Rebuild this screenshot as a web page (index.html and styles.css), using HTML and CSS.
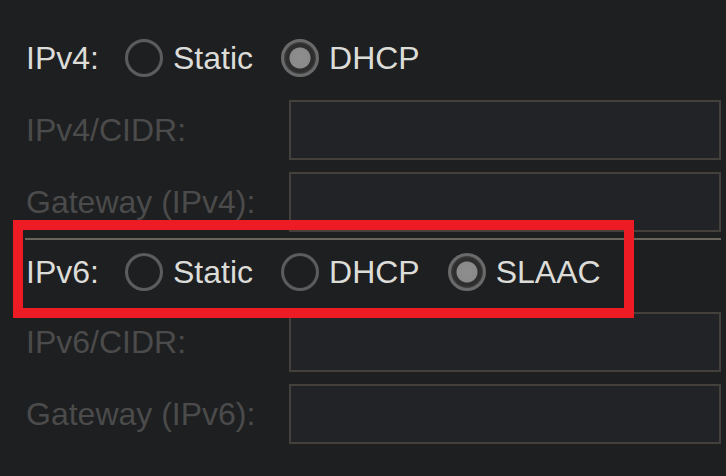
FILE: index.html
```html
<!DOCTYPE html>
<html>
<head>
<meta charset="utf-8">
<link rel="stylesheet" href="styles.css">
</head>
<body>
<div class="panel">
  <div class="mode-row">
    <span class="mode-label">IPv4:</span>
    <span class="option"><span class="radio"></span><span class="opt-text">Static</span></span>
    <span class="option"><span class="radio checked"></span><span class="opt-text">DHCP</span></span>
  </div>
  <div class="field-row first">
    <span class="field-label">IPv4/CIDR:</span>
    <span class="field-input"></span>
  </div>
  <div class="field-row">
    <span class="field-label">Gateway (IPv4):</span>
    <span class="field-input"></span>
  </div>
  <div class="separator"></div>
  <div class="mode-row v6">
    <span class="mode-label">IPv6:</span>
    <span class="option"><span class="radio"></span><span class="opt-text">Static</span></span>
    <span class="option"><span class="radio"></span><span class="opt-text">DHCP</span></span>
    <span class="option"><span class="radio checked"></span><span class="opt-text">SLAAC</span></span>
  </div>
  <div class="field-row first">
    <span class="field-label">IPv6/CIDR:</span>
    <span class="field-input"></span>
  </div>
  <div class="field-row">
    <span class="field-label">Gateway (IPv6):</span>
    <span class="field-input"></span>
  </div>
  <div class="highlight"></div>
</div>
</body>
</html>
```
FILE: styles.css
```css
html, body {
  margin: 0;
  padding: 0;
  background: #1e1f21;
  width: 726px;
  height: 476px;
  overflow: hidden;
}
.panel {
  position: relative;
  padding: 39px 5px 0 26px;
  font-family: "Liberation Sans", Arial, sans-serif;
  font-size: 32px;
  color: #dcdcd8;
}
.mode-row {
  display: flex;
  align-items: center;
  height: 38px;
  margin-bottom: 23px;
}
.mode-row.v6 {
  margin-top: 13px;
  margin-bottom: 21px;
}
.mode-label {
  width: 99px;
  flex: none;
  line-height: 38px;
}
.option {
  display: flex;
  align-items: center;
  margin-right: 28px;
}
.radio {
  box-sizing: border-box;
  width: 38px;
  height: 38px;
  border-radius: 50%;
  border: 3px solid #5c5c5c;
  background: #1e1f21;
  box-shadow: inset 0 0 1px #444;
  flex: none;
}
.radio.checked {
  border: 3px solid #6a6a6a;
  background: radial-gradient(circle, #8e8e8e 0, #8a8a8a 10px, #2e2e2e 11px, #2e2e2e 14px, #444 16px);
}
.opt-text {
  margin-left: 10px;
  line-height: 38px;
}
.field-row {
  display: flex;
  align-items: center;
  height: 60px;
  margin-top: 12px;
}
.field-row.first {
  margin-top: 0;
}
.field-label {
  width: 263px;
  flex: none;
  color: #4b4b4b;
}
.field-input {
  box-sizing: border-box;
  flex: 1;
  height: 60px;
  border: 2px solid #44413c;
  background: #222326;
}
.separator {
  height: 2px;
  margin-top: 6px;
  margin-left: -1px;
  background: #6b665c;
}
.highlight {
  position: absolute;
  left: 13px;
  top: 220px;
  width: 621px;
  height: 98px;
  box-sizing: border-box;
  border: 10px solid #ed1c24;
}
```
